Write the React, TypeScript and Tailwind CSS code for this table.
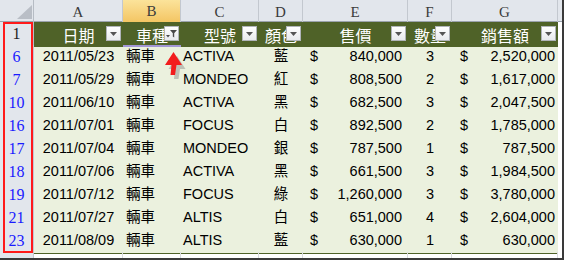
const COLS = ['A', 'B', 'C', 'D', 'E', 'F', 'G']
const GRID = 'grid grid-cols-[34px_89px_58px_78px_44px_105px_44px_106px_1fr]'

type Row = {
  n: number
  date: string
  kind: string
  model: string
  color: string
  price: string
  qty: number
  total: string
}

const ROWS: Row[] = [
  { n: 6, date: '2011/05/23', kind: '輛車', model: 'ACTIVA', color: '藍', price: '840,000', qty: 3, total: '2,520,000' },
  { n: 7, date: '2011/05/29', kind: '輛車', model: 'MONDEO', color: '紅', price: '808,500', qty: 2, total: '1,617,000' },
  { n: 10, date: '2011/06/10', kind: '輛車', model: 'ACTIVA', color: '黑', price: '682,500', qty: 3, total: '2,047,500' },
  { n: 16, date: '2011/07/01', kind: '輛車', model: 'FOCUS', color: '白', price: '892,500', qty: 2, total: '1,785,000' },
  { n: 17, date: '2011/07/04', kind: '輛車', model: 'MONDEO', color: '銀', price: '787,500', qty: 1, total: '787,500' },
  { n: 18, date: '2011/07/06', kind: '輛車', model: 'ACTIVA', color: '黑', price: '661,500', qty: 3, total: '1,984,500' },
  { n: 19, date: '2011/07/12', kind: '輛車', model: 'FOCUS', color: '綠', price: '1,260,000', qty: 3, total: '3,780,000' },
  { n: 21, date: '2011/07/27', kind: '輛車', model: 'ALTIS', color: '白', price: '651,000', qty: 4, total: '2,604,000' },
  { n: 23, date: '2011/08/09', kind: '輛車', model: 'ALTIS', color: '藍', price: '630,000', qty: 1, total: '630,000' },
]

const HEADERS = ['日期', '車種', '型號', '顏色', '售價', '數量', '銷售額']

function DropButton({ filtered }: { filtered?: boolean }) {
  return (
    <div className="absolute right-[2px] top-[4px] flex h-[15px] w-[15px] items-center justify-center border border-[#b0b4b9] bg-gradient-to-b from-white to-[#e8eaed]">
      {filtered ? (
        <svg width="13" height="11" viewBox="0 0 13 11">
          <path d="M5 2h7l-2.8 3.2v4.3l-1.4-1V5.2z" fill="#4a4a4a" />
          <path d="M1 7h4l-2 2.5z" fill="#4a4a4a" />
        </svg>
      ) : (
        <svg width="7" height="4" viewBox="0 0 7 4">
          <path d="M0 0h7l-3.5 4z" fill="#555" />
        </svg>
      )}
    </div>
  )
}

export default function App() {
  return (
    <div className="relative h-[260px] w-[564px] overflow-hidden border-b-2 border-r-2 border-[#3a3a3a] bg-white font-['Liberation_Sans','Noto_Sans_CJK_TC',sans-serif] text-[14.5px] text-black">
      {/* column letters */}
      <div className={`${GRID} h-[22px] border-b border-[#9ba3ad] bg-[#e2e6ec] font-['Liberation_Serif',serif] text-[15px] text-[#3b3b3b]`}>
        <div className="relative border-r border-[#b6bcc4]">
          <svg className="absolute left-[17px] top-[5px]" width="15" height="14" viewBox="0 0 15 14">
            <path d="M15 0v14H0z" fill="#b9bec6" />
          </svg>
        </div>
        {COLS.map((c) => (
          <div
            key={c}
            className={`flex items-center justify-center border-r border-[#c3c8cf] ${
              c === 'B' ? 'border-b-2 border-b-[#e2a73c] bg-gradient-to-b from-[#fbe39a] to-[#f3c460]' : ''
            }`}
          >
            {c}
          </div>
        ))}
        <div />
      </div>

      {/* header row */}
      <div className={`${GRID} h-[23px]`}>
        <div className="flex items-center justify-center border-b border-r border-[#b6bcc4] bg-[#e2e6ec] font-['Liberation_Serif',serif] text-[16px] text-[#222]">
          1
        </div>
        {HEADERS.map((h, i) => (
          <div
            key={h}
            className="relative flex items-center justify-center bg-[#4f6228] font-['Noto_Sans_CJK_TC',sans-serif] text-[16px] leading-none text-white"
          >
            {h}
            <DropButton filtered={i === 1} />
            {i === 1 && <div className="absolute bottom-[0px] left-0 h-[2px] w-full bg-[#a397d6]" />}
          </div>
        ))}
        <div />
      </div>

      {ROWS.map((r) => (
        <div key={r.n} className={`${GRID} h-[23px]`}>
          <div className="flex items-center justify-center border-b border-r border-[#c3c8cf] bg-[#e2e6ec] font-['Liberation_Serif',serif] text-[16px] text-[#1a1aff]">
            {r.n}
          </div>
          <div className="flex items-center justify-center border-b border-[#4f6228] bg-[#ebf1de]">{r.date}</div>
          <div className="flex items-center border-b border-[#4f6228] bg-[#ebf1de] pl-[3px]">{r.kind}</div>
          <div className="flex items-center border-b border-[#4f6228] bg-[#ebf1de] pl-[2px]">{r.model}</div>
          <div className="flex items-center justify-center border-b border-[#4f6228] bg-[#ebf1de]">{r.color}</div>
          <div className="flex items-center justify-between border-b border-[#4f6228] bg-[#ebf1de] pl-[7px] pr-[6px]">
            <span>$</span>
            <span>{r.price}</span>
          </div>
          <div className="flex items-center justify-center border-b border-[#4f6228] bg-[#ebf1de]">{r.qty}</div>
          <div className="flex items-center justify-between border-b border-[#4f6228] bg-[#ebf1de] pl-[8px] pr-[3px]">
            <span>$</span>
            <span>{r.total}</span>
          </div>
          <div />
        </div>
      ))}

      {/* partial next row */}
      <div className={`${GRID} h-[10px]`}>
        <div className="border-r border-[#c3c8cf] bg-[#e2e6ec]" />
        {COLS.map((c) => (
          <div key={c} className="border-r border-[#dadcdf]" />
        ))}
        <div />
      </div>

      {/* red box around row numbers */}
      <div className="absolute left-[3px] top-[22px] h-[231px] w-[30px] border-2 border-[#ff1a1a]" />

      {/* red arrow */}
      <svg className="absolute left-[160px] top-[48px]" width="30" height="32" viewBox="0 0 30 32">
        <path d="M15 6l8.5 13h-5.5l-1.5 10h-4.5l1-10H6.5z" fill="#7a7a7a" opacity="0.4" transform="translate(2 2)" />
        <path d="M13.5 4l8.5 13h-5.5l-1.5 10h-4.5l1-10H5z" fill="#f21d1d" />
      </svg>
    </div>
  )
}
